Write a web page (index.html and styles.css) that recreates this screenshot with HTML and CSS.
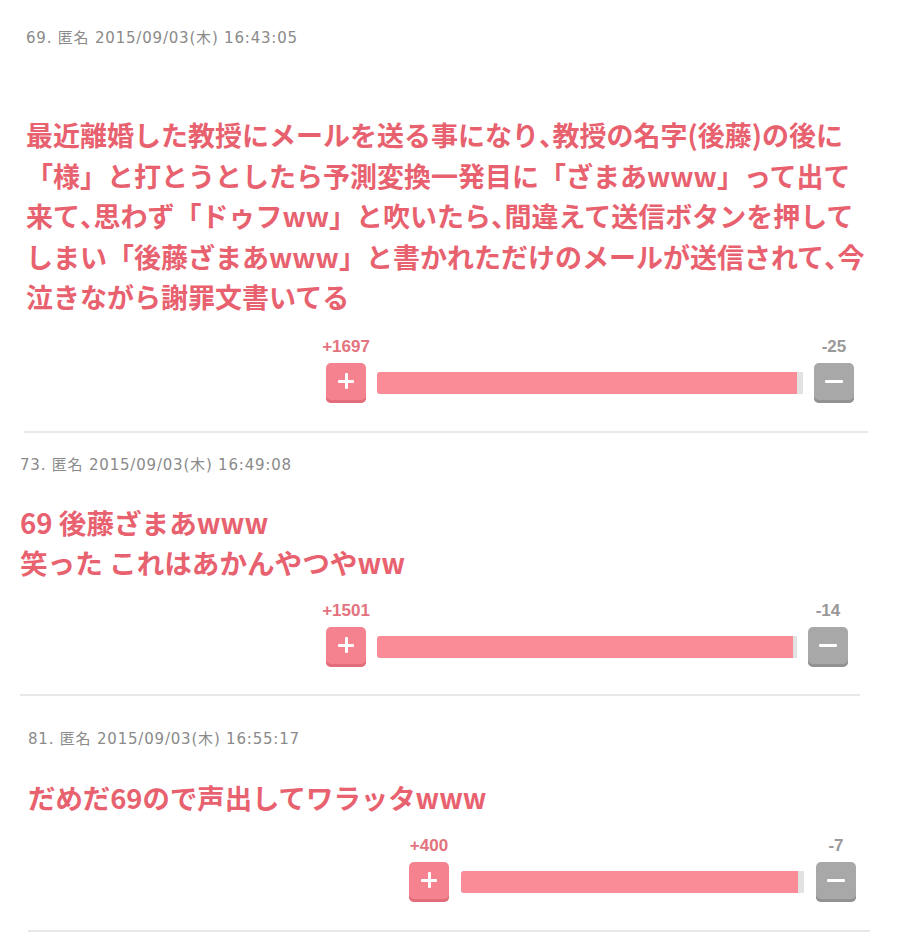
FILE: index.html
```html
<!DOCTYPE html>
<html lang="ja">
<head>
<meta charset="utf-8">
<title>コメント</title>
<link rel="stylesheet" href="styles.css">
</head>
<body>
<main class="thread">

  <article class="post post--first">
    <div class="post-head">69. 匿名 2015/09/03(木) 16:43:05</div>
    <p class="post-body">最近離婚した教授にメールを送る事になり<span class="comma">、</span>教授の名字(後藤)の後に<br>「様」と打とうとしたら予測変換一発目に「ざまあwww」って出て<br>来て<span class="comma">、</span>思わず「ドゥフww」と吹いたら<span class="comma">、</span>間違えて送信ボタンを押して<br>しまい「後藤ざまあwww」と書かれただけのメールが送信されて<span class="comma">、</span>今<br>泣きながら謝罪文書いてる</p>
    <div class="vote">
      <span class="vote-count vote-count--plus">+1697</span>
      <span class="vote-count vote-count--minus">-25</span>
      <button class="vote-btn vote-btn--plus" aria-label="プラス"></button>
      <div class="vote-bar"><div class="vote-fill" style="width:98.5%"></div></div>
      <button class="vote-btn vote-btn--minus" aria-label="マイナス"></button>
    </div>
  </article>

  <article class="post post--second">
    <div class="post-head">73. 匿名 2015/09/03(木) 16:49:08</div>
    <p class="post-body">69 後藤ざまあwww<br>笑った これはあかんやつやww</p>
    <div class="vote">
      <span class="vote-count vote-count--plus">+1501</span>
      <span class="vote-count vote-count--minus">-14</span>
      <button class="vote-btn vote-btn--plus" aria-label="プラス"></button>
      <div class="vote-bar"><div class="vote-fill" style="width:99.1%"></div></div>
      <button class="vote-btn vote-btn--minus" aria-label="マイナス"></button>
    </div>
  </article>

  <article class="post post--third">
    <div class="post-head">81. 匿名 2015/09/03(木) 16:55:17</div>
    <p class="post-body">だめだ69ので声出してワラッタwww</p>
    <div class="vote">
      <span class="vote-count vote-count--plus">+400</span>
      <span class="vote-count vote-count--minus">-7</span>
      <button class="vote-btn vote-btn--plus" aria-label="プラス"></button>
      <div class="vote-bar"><div class="vote-fill" style="width:98.3%"></div></div>
      <button class="vote-btn vote-btn--minus" aria-label="マイナス"></button>
    </div>
  </article>

</main>
</body>
</html>
```
FILE: styles.css
```css
html, body {
  margin: 0;
  padding: 0;
  background: #ffffff;
}

body {
  font-family: "DejaVu Sans", "Noto Sans CJK JP", sans-serif;
  width: 905px;
  height: 938px;
  overflow: hidden;
}

.thread {
  display: flex;
  flex-direction: column;
}

/* one comment: header line, body text, vote widget, bottom rule */
.post {
  display: flex;
  flex-direction: column;
  margin-left: var(--left);
  width: var(--width);
  padding-top: var(--top);
  border-bottom: 2px solid #e8e8e8;
  box-sizing: border-box;
}

.post--first {
  --left: 24px;
  --width: 844px;
  --top: 28px;
  --text-indent: 2px;
  --body-size: 27px;
  --body-line: 40.5px;
  --body-gap: 67px;
  --vote-left: 302px;
  --vote-width: 528px;
  --bar-gap: 11px;
  --bottom: 28px;
}

.post--second {
  --left: 20px;
  --width: 840px;
  --top: 22px;
  --text-indent: 0px;
  --body-size: 27.6px;
  --body-line: 40px;
  --body-gap: 27px;
  --vote-left: 306px;
  --vote-width: 522px;
  --bar-gap: 11px;
  --bottom: 27px;
}

.post--third {
  --left: 28px;
  --width: 842px;
  --top: 33px;
  --text-indent: 0px;
  --body-size: 27.4px;
  --body-line: 40px;
  --body-gap: 28px;
  --vote-left: 381px;
  --vote-width: 447px;
  --bar-gap: 12px;
  --bottom: 28px;
}

.post-head {
  padding-left: var(--text-indent);
  font-size: 15px;
  letter-spacing: 0.8px;
  line-height: 20px;
  color: #8a8a8a;
  white-space: nowrap;
}

.post-body {
  margin: var(--body-gap) 0 0;
  padding-left: var(--text-indent);
  font-family: "Noto Sans CJK JP", sans-serif;
  font-weight: 700;
  font-size: var(--body-size);
  line-height: var(--body-line);
  color: #e8616f;
  white-space: nowrap;
}

/* ideographic comma set half-width */
.comma {
  font-feature-settings: "halt" 1;
}

/* counts above the two buttons, bar stretched between them */
.vote {
  display: grid;
  grid-template-columns: 40px 1fr 40px;
  grid-template-rows: 18px 40px;
  column-gap: var(--bar-gap);
  row-gap: 7px;
  margin: 20px 0 var(--bottom) var(--vote-left);
  width: var(--vote-width);
}

.vote-count {
  grid-row: 1;
  font-family: "Liberation Sans", Arial, sans-serif;
  font-weight: 700;
  font-size: 17px;
  line-height: 18px;
  text-align: center;
  white-space: nowrap;
  justify-self: center;
}

.vote-count--plus {
  grid-column: 1;
  color: #e3737e;
}

.vote-count--minus {
  grid-column: 3;
  color: #999999;
}

.vote-btn {
  grid-row: 2;
  position: relative;
  width: 40px;
  height: 40px;
  padding: 0;
  border: 0;
  border-radius: 5px;
  cursor: pointer;
}

.vote-btn--plus {
  grid-column: 1;
  background: #f5838f;
  box-shadow: inset 0 -3px 0 #e26c79;
}

.vote-btn--minus {
  grid-column: 3;
  background: #a8a8a8;
  box-shadow: inset 0 -3px 0 #929292;
}

/* white glyph strokes inside the buttons */
.vote-btn::before,
.vote-btn::after {
  content: "";
  position: absolute;
  left: 50%;
  top: 50%;
  background: #ffffff;
  border-radius: 1px;
}

.vote-btn--plus::before {
  width: 16px;
  height: 3px;
  margin: -3px 0 0 -8px;
}

.vote-btn--plus::after {
  width: 3px;
  height: 16px;
  margin: -9.5px 0 0 -1.5px;
}

.vote-btn--minus::before {
  width: 18px;
  height: 3px;
  margin: -3px 0 0 -9px;
}

.vote-btn--minus::after {
  display: none;
}

.vote-bar {
  grid-row: 2;
  grid-column: 2;
  align-self: start;
  margin-top: 9px;
  height: 22px;
  background: #e2e2e2;
  border-radius: 3px 0 0 3px;
  overflow: hidden;
}

.vote-fill {
  height: 100%;
  background: #f98c97;
}
```
